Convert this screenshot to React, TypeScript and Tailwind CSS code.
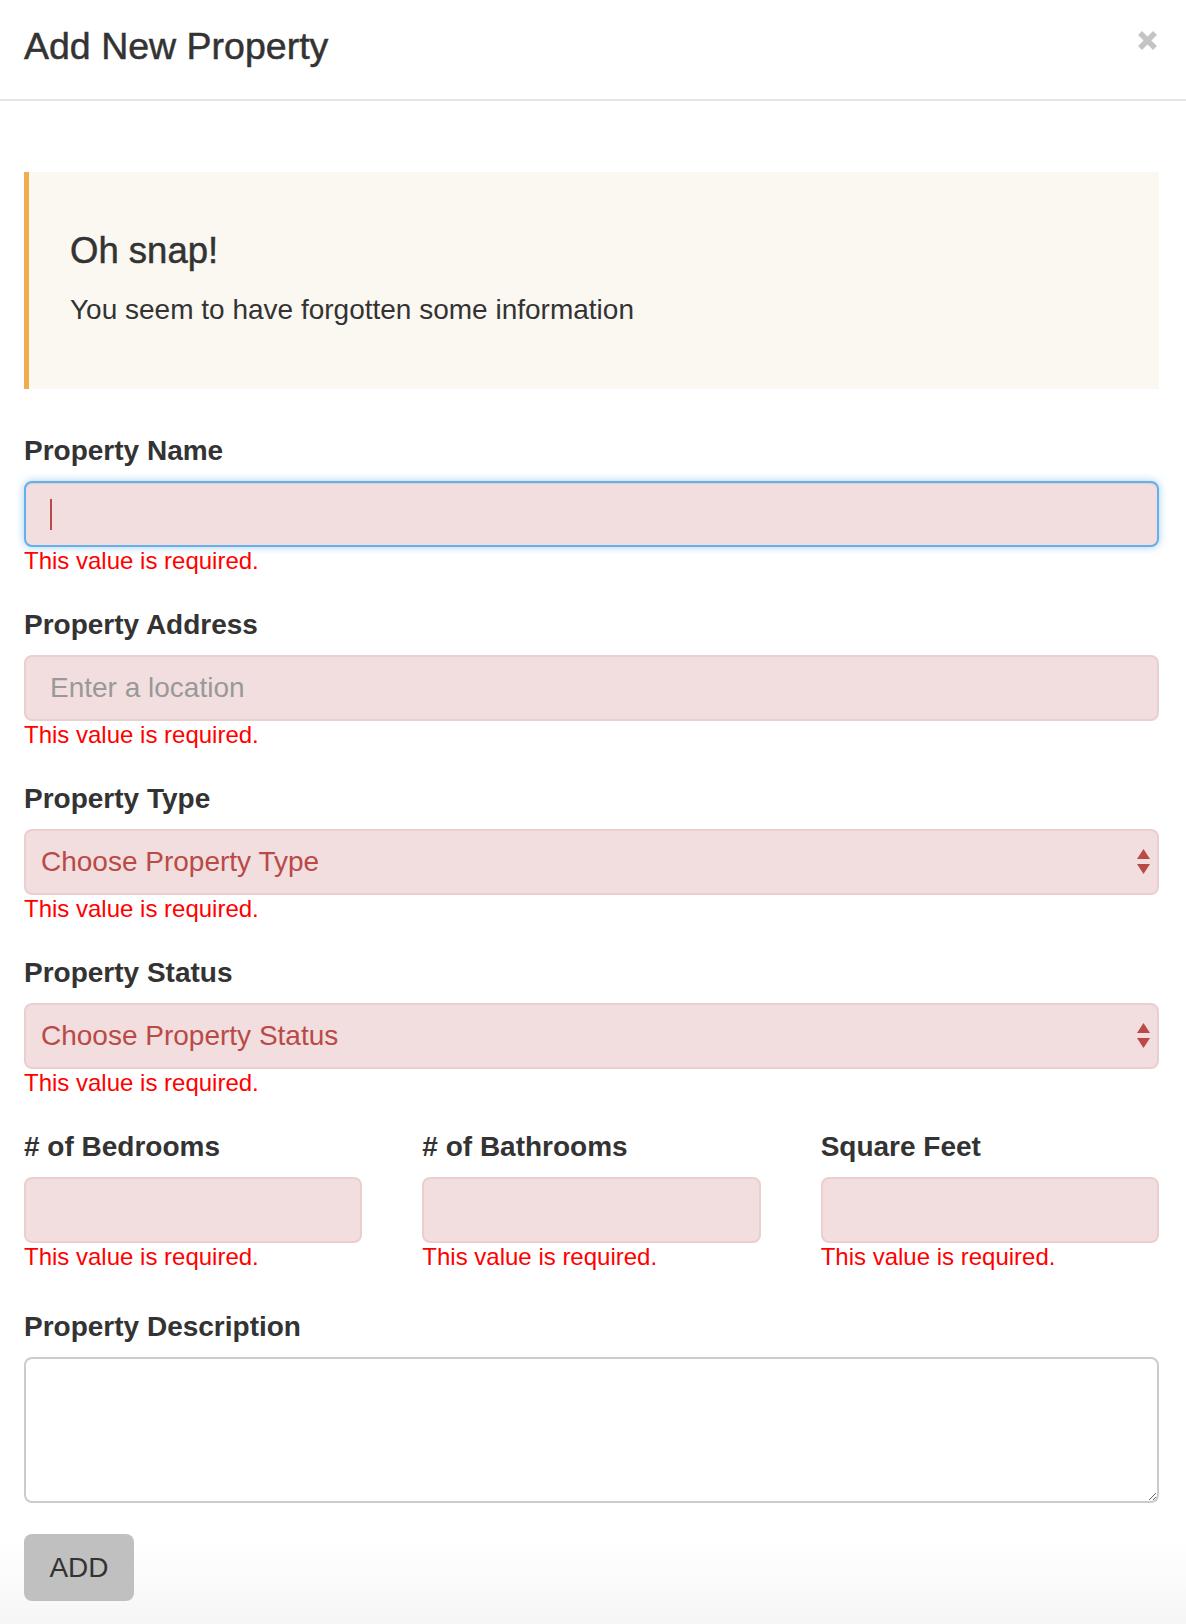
const labelCls = "block text-[28px] leading-[40px] font-bold text-[#333] mb-[10px]";
const errorCls = "text-[24px] leading-[28px] text-[#ff0000]";
const errorField =
  "w-full h-[66px] rounded-[8px] border-2 border-[#ebcfcf] bg-[#f2dede] text-[28px] outline-none";

function Arrows() {
  return (
    <svg
      className="pointer-events-none absolute right-[9px] top-[20px]"
      width="13"
      height="25"
      viewBox="0 0 13 25"
    >
      <polygon points="6.5,0 13,10 0,10" fill="#b94a48" />
      <polygon points="0,15 13,15 6.5,25" fill="#b94a48" />
    </svg>
  );
}

function SelectField({ label, placeholder }: { label: string; placeholder: string }) {
  return (
    <div className="mb-[30px]">
      <label className={labelCls}>{label}</label>
      <div className="relative">
        <select
          defaultValue=""
          className={`${errorField} appearance-none pl-[15px] pr-10 text-[#b94a48]`}
        >
          <option value="">{placeholder}</option>
        </select>
        <Arrows />
      </div>
      <div className={errorCls}>This value is required.</div>
    </div>
  );
}

export default function App() {
  return (
    <div className="min-h-[1624px] w-full bg-[linear-gradient(to_bottom,#ffffff_1540px,#f6f6f6_1624px)] font-['Liberation_Sans',Arial,sans-serif] text-[#333]">
      {/* header */}
      <div className="flex h-[101px] items-start justify-between border-b-2 border-[#e5e5e5] pl-6 pr-[28px] pt-[26px]">
        <h4 className="text-[37.5px] leading-[40px] [-webkit-text-stroke:0.5px_#333]">Add New Property</h4>
        <button className="mt-[4px]" aria-label="Close">
          <svg width="21" height="21" viewBox="0 0 21 21">
            <path d="M3 3 L18 18 M18 3 L3 18" stroke="#c4c4c4" strokeWidth="5.5" />
          </svg>
        </button>
      </div>

      <div className="pl-6 pr-[27px] pt-[71px]">
        {/* alert */}
        <div className="border-l-[5px] border-[#f0ad4e] bg-[#fbf8f2] pl-[41px] py-[59px]">
          <h4 className="text-[36.5px] leading-[40px] [-webkit-text-stroke:0.5px_#333]">Oh snap!</h4>
          <p className="mt-[19px] text-[28px] leading-[40px]">You seem to have forgotten some information</p>
        </div>

        <form className="mt-[42px]">
          <div className="mb-[30px]">
            <label className={labelCls}>Property Name</label>
            <div className="relative flex h-[66px] w-full items-center rounded-[8px] border-2 border-[#66afe9] bg-[#f2dede] shadow-[inset_0_1px_1px_rgba(0,0,0,0.075),0_0_8px_rgba(102,175,233,0.6)]">
              <span className="ml-[24px] h-[31px] w-[2px] bg-[#b94a48]" />
            </div>
            <div className={errorCls}>This value is required.</div>
          </div>

          <div className="mb-[30px]">
            <label className={labelCls}>Property Address</label>
            <input
              placeholder="Enter a location"
              className={`${errorField} px-[24px] placeholder:text-[#999]`}
            />
            <div className={errorCls}>This value is required.</div>
          </div>

          <SelectField label="Property Type" placeholder="Choose Property Type" />
          <SelectField label="Property Status" placeholder="Choose Property Status" />

          <div className="mb-[36px] grid grid-cols-3 gap-x-[60px]">
            {["# of Bedrooms", "# of Bathrooms", "Square Feet"].map((l) => (
              <div key={l}>
                <label className={labelCls}>{l}</label>
                <input className={`${errorField} px-[24px]`} />
                <div className={errorCls}>This value is required.</div>
              </div>
            ))}
          </div>

          <div>
            <label className={labelCls}>Property Description</label>
            <textarea className="block h-[146px] w-full rounded-[8px] border-2 border-[#cccccc] bg-white px-[24px] py-[12px] text-[28px] outline-none" />
          </div>

          <button
            type="button"
            className="mt-[31px] h-[67px] w-[110px] rounded-[8px] bg-[#c0c0c0] text-[28px] text-[#333]"
          >
            ADD
          </button>
        </form>
      </div>
    </div>
  );
}
